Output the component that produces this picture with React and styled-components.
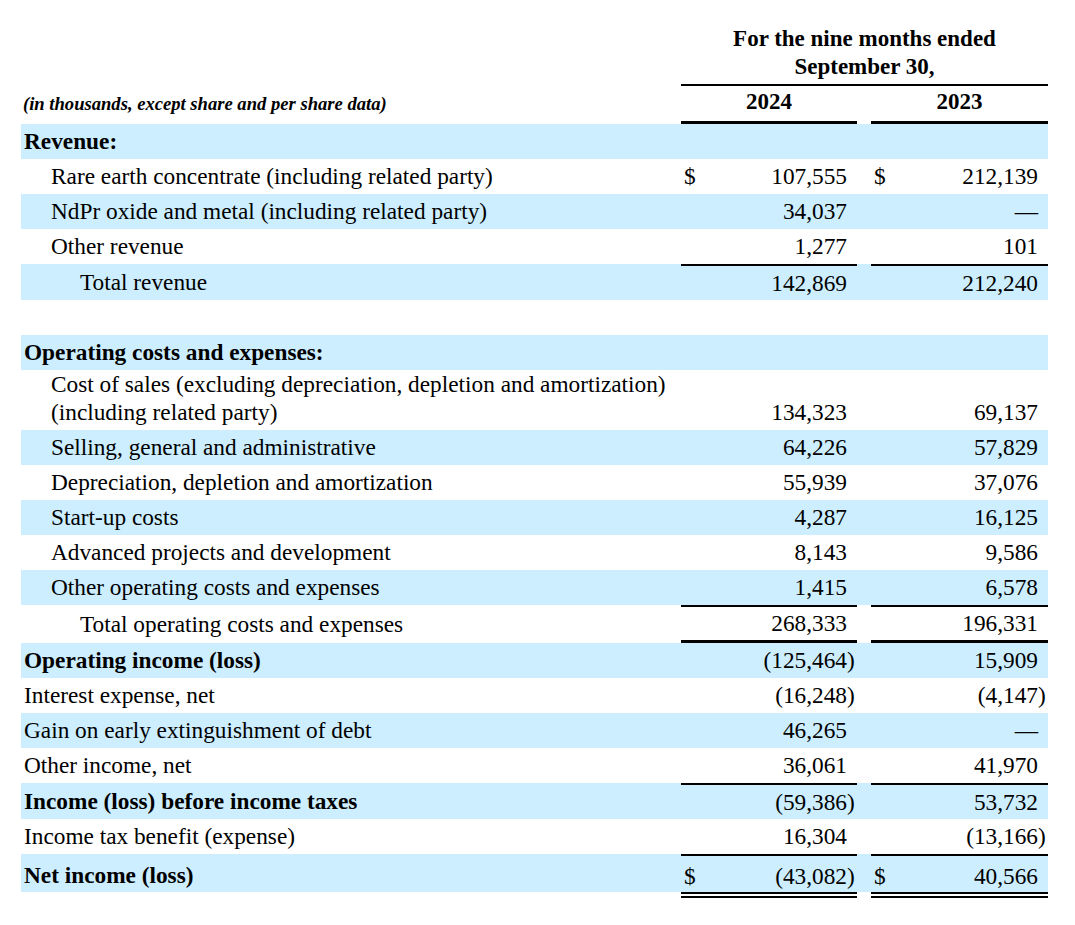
import React from "react";
import styled, { createGlobalStyle, css } from "styled-components";

const GlobalStyle = createGlobalStyle`
  html, body {
    margin: 0;
    padding: 0;
    background: #ffffff;
  }
  body {
    font-family: "Liberation Serif", "Times New Roman", serif;
    color: #000000;
    font-size: 23.3px;
  }
`;

const COLS = "660px 176px 14px 177px";
const SHADE = "#cceeff";

const Page = styled.div`
  padding: 25px 0 40px 21px;
  width: 1054px;
  box-sizing: border-box;
`;

const Table = styled.div`
  display: flex;
  flex-direction: column;
  width: 1027px;
`;

const HeaderRow = styled.div`
  display: grid;
  grid-template-columns: ${COLS};
`;

const PeriodHeading = styled.div`
  grid-column: 2 / 5;
  text-align: center;
  font-weight: 700;
  font-size: 23px;
  line-height: 28px;
  padding-bottom: 3px;
  border-bottom: 2px solid #000;
`;

const YearRow = styled.div`
  display: grid;
  grid-template-columns: ${COLS};
  height: 38px;
`;

const UnitsNote = styled.div`
  display: flex;
  align-items: center;
  padding: 0 0 2px 2px;
  font-size: 18.6px;
  font-weight: 700;
  font-style: italic;
  white-space: nowrap;
`;

const YearCell = styled.div`
  grid-column: ${(p) => p.$col};
  display: flex;
  align-items: center;
  justify-content: center;
  box-sizing: border-box;
  padding-bottom: 4px;
  font-weight: 700;
  font-size: 23px;
  border-bottom: 3px solid #000;
`;

const Row = styled.div`
  display: grid;
  grid-template-columns: ${COLS};
  height: ${(p) => p.$h}px;
  background: ${(p) => (p.$shade ? SHADE : "transparent")};
`;

const LabelCell = styled.div`
  display: flex;
  flex-direction: column;
  justify-content: ${(p) => (p.$top ? "flex-start" : "center")};
  padding-left: ${(p) => [3, 30, 59][p.$indent]}px;
  padding-top: ${(p) => p.$pt || 0}px;
  padding-bottom: ${(p) => (p.$top ? 0 : 1)}px;
  box-sizing: border-box;
  line-height: 28px;
  white-space: nowrap;
  font-weight: ${(p) => (p.$bold ? 700 : 400)};
`;

const ruleTop = {
  thin: css`border-top: 2px solid #000;`,
  none: css``,
};
const ruleBottom = {
  thick: css`border-bottom: 3px solid #000;`,
  none: css``,
};

const AmountCell = styled.div`
  grid-column: ${(p) => p.$col};
  display: flex;
  align-items: ${(p) => (p.$bottom ? "flex-end" : "center")};
  justify-content: space-between;
  box-sizing: border-box;
  line-height: 28px;
  padding-left: 3px;
  padding-top: ${(p) => p.$pt || 0}px;
  padding-bottom: ${(p) => (p.$bottom ? 4 : 1)}px;
  ${(p) => ruleTop[p.$top || "none"]}
  ${(p) => ruleBottom[p.$bottomRule || "none"]}
`;

const Currency = styled.span`
  width: 12px;
`;

const Figure = styled.span`
  display: flex;
  align-items: baseline;
`;

const Paren = styled.span`
  display: inline-block;
  width: 10px;
  text-align: left;
`;

const DoubleRuleRow = styled.div`
  display: grid;
  grid-template-columns: ${COLS};
  height: 6px;
`;

const DoubleRule = styled.div`
  grid-column: ${(p) => p.$col};
  border-top: 6px double #000;
`;

const rows = [
  { label: "Revenue:", bold: true, indent: 0 },
  { label: "Rare earth concentrate (including related party)", indent: 1, v: ["107,555", "212,139"], dollar: true },
  { label: "NdPr oxide and metal (including related party)", indent: 1, v: ["34,037", "—"] },
  { label: "Other revenue", indent: 1, v: ["1,277", "101"] },
  { label: "Total revenue", indent: 2, v: ["142,869", "212,240"], top: "thin", h: 36 },
  { label: "", gap: true },
  { label: "Operating costs and expenses:", bold: true, indent: 0 },
  {
    label: ["Cost of sales (excluding depreciation, depletion and amortization)", "(including related party)"],
    indent: 1,
    v: ["134,323", "69,137"],
    h: 60,
    multi: true,
  },
  { label: "Selling, general and administrative", indent: 1, v: ["64,226", "57,829"] },
  { label: "Depreciation, depletion and amortization", indent: 1, v: ["55,939", "37,076"] },
  { label: "Start-up costs", indent: 1, v: ["4,287", "16,125"] },
  { label: "Advanced projects and development", indent: 1, v: ["8,143", "9,586"] },
  { label: "Other operating costs and expenses", indent: 1, v: ["1,415", "6,578"] },
  { label: "Total operating costs and expenses", indent: 2, v: ["268,333", "196,331"], top: "thin", bottomRule: "thick", h: 38 },
  { label: "Operating income (loss)", bold: true, indent: 0, v: ["(125,464)", "15,909"] },
  { label: "Interest expense, net", indent: 0, v: ["(16,248)", "(4,147)"] },
  { label: "Gain on early extinguishment of debt", indent: 0, v: ["46,265", "—"] },
  { label: "Other income, net", indent: 0, v: ["36,061", "41,970"] },
  { label: "Income (loss) before income taxes", bold: true, indent: 0, v: ["(59,386)", "53,732"], top: "thin", h: 36 },
  { label: "Income tax benefit (expense)", indent: 0, v: ["16,304", "(13,166)"] },
  { label: "Net income (loss)", bold: true, indent: 0, v: ["(43,082)", "40,566"], top: "thin", dollar: true, h: 38, pt: 4 },
];

function Amount({ value, col, dollar, row }) {
  const neg = value.startsWith("(");
  const text = neg ? value.slice(0, -1) : value;
  return (
    <AmountCell
      $col={col}
      $top={row.top}
      $bottomRule={row.bottomRule}
      $bottom={row.multi}
      $pt={row.pt}
    >
      <Currency>{dollar ? "$" : ""}</Currency>
      <Figure>
        {text}
        <Paren>{neg ? ")" : ""}</Paren>
      </Figure>
    </AmountCell>
  );
}

export default function App() {
  let shade = true;
  return (
    <Page>
      <GlobalStyle />
      <Table>
        <HeaderRow>
          <div />
          <PeriodHeading>
            For the nine months ended
            <br />
            September 30,
          </PeriodHeading>
        </HeaderRow>
        <YearRow>
          <UnitsNote>(in thousands, except share and per share data)</UnitsNote>
          <YearCell $col={2}>2024</YearCell>
          <YearCell $col={4}>2023</YearCell>
        </YearRow>
        {rows.map((r, i) => {
          const s = shade;
          shade = !shade;
          return (
            <Row key={i} $shade={s} $h={r.h || 35}>
              <LabelCell $indent={r.indent || 0} $bold={r.bold} $top={r.multi} $pt={r.pt}>
                {Array.isArray(r.label)
                  ? r.label.map((l, j) => <span key={j}>{l}</span>)
                  : r.label}
              </LabelCell>
              {r.v && (
                <>
                  <Amount value={r.v[0]} col={2} dollar={r.dollar} row={r} />
                  <Amount value={r.v[1]} col={4} dollar={r.dollar} row={r} />
                </>
              )}
            </Row>
          );
        })}
        <DoubleRuleRow>
          <DoubleRule $col={2} />
          <DoubleRule $col={4} />
        </DoubleRuleRow>
      </Table>
    </Page>
  );
}
